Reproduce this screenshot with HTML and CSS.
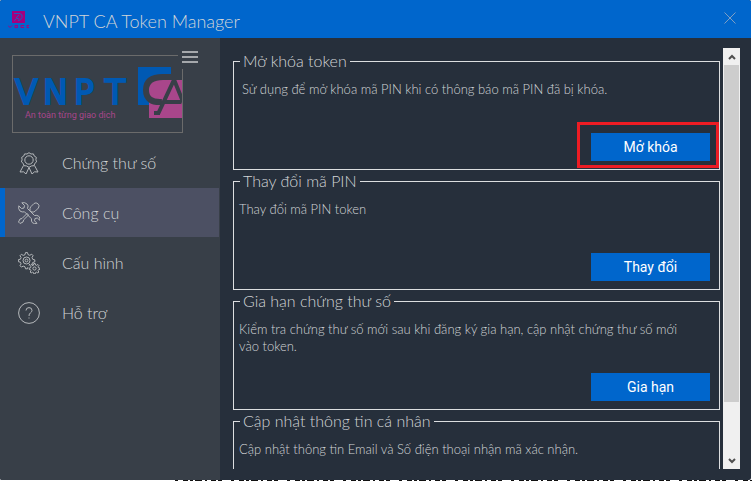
FILE: index.html
```html
<!DOCTYPE html>
<html lang="vi">
<head>
<meta charset="utf-8">
<title>VNPT CA Token Manager</title>
<link rel="stylesheet" href="styles.css">
</head>
<body>
<div class="window">
  <header class="titlebar">
    <svg class="app-icon" width="22" height="18" viewBox="0 0 22 18" aria-hidden="true">
      <path fill="#a3007f" d="M4 1h13v12H4z"/>
      <path fill="none" stroke="#2458c0" d="M6 3.500h6q3 1 2 4t-4 3M11 5l-3 3 3 1M6 11l2-2"/>
      <path fill="none" stroke="#a3007f" d="M0 15.500l2 2 2-2M7 15.500h2.500v2H7zM16 15.500h-3v2h3M21 15.500h-2v2h2"/>
    </svg>
    <h1 class="title">VNPT CA Token Manager</h1>
    <button class="close" aria-label="Đóng">
      <svg width="12" height="12" viewBox="0 0 12 12"><path d="M.5.5l11 11M11.500.5l-11 11"/></svg>
    </button>
  </header>

  <div class="body">
    <aside class="sidebar">
      <div class="brand">
        <svg class="logo" viewBox="0 0 169 76" role="img" aria-label="VNPT CA">
          <g class="logo-name">
            <text x="2" y="48">V</text>
            <text x="30" y="48">N</text>
            <text x="61" y="48">P</text>
            <text x="92" y="48">T</text>
          </g>
          <text class="logo-slogan" x="12" y="62">An toàn từng giao dịch</text>
          <path fill="#0059b3" d="M125 11h33v38h-33z"/>
          <path fill="#383f48" d="M136 24h33v25h-33z"/>
          <path fill="#a9468b" d="M136 24h33v38h-33z"/>
          <path class="logo-cut" d="M169 21h-19Q133 21 133 34t16 12"/>
          <path class="logo-cut thin" d="M145 58l15-32h2l13 32M150 46h18M141 57h6"/>
        </svg>
        <button class="menu" aria-label="Menu">
          <svg width="16" height="12" viewBox="0 0 16 12"><path d="M0 1h16M0 6h16M0 11h16"/></svg>
        </button>
      </div>
      <nav class="nav">
        <a class="nav-item" href="#certificates">
          <svg class="icon" viewBox="0 0 22 22"><circle cx="11" cy="8" r="4.200"/><path d="M11 .7l2 1.300 2.400-.1.900 2.200 2 1.200-.4 2.400.7 2.200-1.800 1.500-.8 2.300-2.400.2L11 15.300l-2.600-1.400-2.400-.2-.8-2.300-1.800-1.500.7-2.200-.4-2.400 2-1.200.9-2.200L9 2zM5.500 13.500L2 20l3.500-.2L8 22l3-6.500L14 22l2.500-2.200 3.500.2-3.500-6.500"/></svg>
          <span>Chứng thư số</span>
        </a>
        <a class="nav-item active" href="#tools" aria-current="page">
          <svg class="icon" viewBox="0 0 22 22"><path d="M3.800.8L6.500 3.500 6 6 3.500 6.500.8 3.800Q0 7 2 9q2 1.500 4.500.8l7 7q-.5 2.500 1 4 2 1.500 4.500.5l-2.500-2.500.5-2.300 2.300-.5 2.500 2.300q.5-2.500-1-4-1.800-1.500-4.300-.8l-7-7Q11 3.500 9 2 7 0 3.800.8zM12 8q-.5-2 1-3.500l3-3q2-1.500 4 .3t.4 4.200l-3 3Q16 10.500 14 10M12.500 8.500l1.200 1.200M9.500 11l-5.500 5.500L2 17l-1.500 3L2 21.500 5 20l.7-2.200 5.300-5.300"/></svg>
          <span>Công cụ</span>
        </a>
        <a class="nav-item" href="#settings">
          <svg class="icon" viewBox="0 0 22 22"><circle cx="8.500" cy="8.500" r="3.500"/><circle cx="8.500" cy="8.500" r="1.400"/><path d="M7.500.6h2l.5 2 1.800.7 1.900-1.100 1.400 1.500-1.100 1.800.7 1.800 2.100.6v2l-2.100.6-.7 1.600 1 1.800M7.500.6L7 2.700l-1.800.7-1.800-1.100L2 3.700l1.100 1.900-.7 1.600-2 .5v2l2 .5.7 1.700L2 13.700l1.400 1.400 1.800-1 1.800.7.5 2h2l.4-1.600M11 13.500l.8-1.500"/><circle cx="16.500" cy="16.500" r="1.600"/><path d="M15.800 11.500h1.400l.3 1.500 1 .4 1.400-.9 1 1-.9 1.300.5 1 1.400.3v1.300l-1.400.3-.5 1 .8 1.300-1 1-1.300-.8-1 .4-.3 1.300h-1.400l-.3-1.300-1-.4-1.300.8-1-1 .8-1.300-.5-1-1.300-.3v-1.300l1.300-.3.5-1-.8-1.300 1-1 1.300.9 1-.4z"/></svg>
          <span>Cấu hình</span>
        </a>
        <a class="nav-item" href="#help">
          <svg class="icon" viewBox="0 0 22 22"><circle cx="11" cy="11" r="10.400"/><path d="M8 8.500Q8 5.600 11 5.600t3 2.800q0 1.400-1.500 2.400T11 14M11 15.500v1"/></svg>
          <span>Hỗ trợ</span>
        </a>
      </nav>
    </aside>

    <main class="content">
      <div class="panels">
        <fieldset class="panel">
          <legend>Mở khóa token</legend>
          <p class="inset">Sử dụng để mở khóa mã PIN khi có thông báo mã PIN đã bị khóa.</p>
          <button class="action marked">Mở khóa</button>
        </fieldset>
        <fieldset class="panel">
          <legend>Thay đổi mã PIN</legend>
          <p>Thay đổi mã PIN token</p>
          <button class="action">Thay đổi</button>
        </fieldset>
        <fieldset class="panel">
          <legend>Gia hạn chứng thư số</legend>
          <p>Kiểm tra chứng thư số mới sau khi đăng ký gia hạn, cập nhật chứng thư số mới vào token.</p>
          <button class="action">Gia hạn</button>
        </fieldset>
        <fieldset class="panel">
          <legend>Cập nhật thông tin cá nhân</legend>
          <p>Cập nhật thông tin Email và Số điện thoại nhận mã xác nhận.</p>
        </fieldset>
      </div>
      <div class="scrollbar">
        <button class="arrow" aria-label="Cuộn lên"><svg width="8" height="6" viewBox="0 0 8 6"><path d="M1 5l3-3 3 3"/></svg></button>
        <div class="track"><div class="thumb"></div></div>
        <button class="arrow" aria-label="Cuộn xuống"><svg width="8" height="6" viewBox="0 0 8 6"><path d="M1 1l3 3 3-3"/></svg></button>
      </div>
    </main>
  </div>
</div>
<svg class="backdrop-line" height="1" aria-hidden="true"><path d="M175 .5h577"/></svg>
</body>
</html>
```

FILE: styles.css
```css
* { box-sizing: border-box; }

body {
  margin: 0;
  height: 100vh;
  display: flex;
  flex-direction: column;
  overflow: hidden;
  background: #fff;
  color: #d2d5d7;
  font-family: Lato, "Noto Sans", sans-serif;
  font-weight: 300;
}

button {
  margin: 0;
  padding: 0;
  border: 0;
  background: none;
  cursor: pointer;
}

.window {
  flex: 1;
  min-height: 0;
  margin-right: 1px;
  display: flex;
  flex-direction: column;
  border-radius: 2px;
  overflow: hidden;
  background: #262f3b;
}

.titlebar {
  height: 38px;
  flex: none;
  display: flex;
  align-items: center;
  padding: 0 15px 0 8px;
  background: #0066cc;
}

.title {
  flex: 1;
  margin: 4px 0 0 13px;
  font-size: 18px;
  font-weight: 300;
  line-height: 24px;
}

.close { height: 14px; margin-bottom: 2px; }
.close svg { display: block; }
.close path { stroke: #7f9fc4; fill: none; }

.body {
  flex: 1;
  min-height: 0;
  display: flex;
}

.sidebar {
  width: 220px;
  flex: none;
  background: #383f48;
}

.brand {
  position: relative;
  width: 171px;
  margin: 17px 0 5px 12px;
  border: 1px solid #6b6b6b;
}

.logo { display: block; width: 100%; height: 76px; }
.logo-name {
  fill: #0059b3;
  stroke: #0059b3;
  stroke-width: 2;
  font: 33px "DejaVu Sans", sans-serif;
}
.logo-slogan { fill: #a9468b; font: 9px Roboto, sans-serif; }
.logo-cut { fill: none; stroke: #383f48; stroke-width: 6; }
.logo-cut.thin { stroke-width: 4; }

.menu {
  position: absolute;
  top: -5px;
  right: -16px;
  padding: 0 0 6px 4px;
  background: #383f48;
}
.menu svg { display: block; }
.menu path { stroke: #a5a8ac; stroke-width: 2; }

.nav-item {
  display: flex;
  align-items: center;
  gap: 22px;
  height: 49px;
  margin: 0 1px 1px 0;
  padding-left: 13px;
  border-left: 5px solid transparent;
  color: inherit;
  font-size: 16px;
  text-decoration: none;
}
.nav-item.active { border-color: #0066cc; background: #4c5063; }

.icon {
  width: 22px;
  height: 22px;
  fill: none;
  stroke: #b5b8bb;
  stroke-width: 1;
}

.content {
  flex: 1;
  min-width: 0;
  display: flex;
  gap: 3px;
  padding: 10px 11px 11px 13px;
}

.panels {
  flex: 1;
  min-width: 0;
  overflow: hidden;
  padding-top: 3px;
}

.panel {
  display: flex;
  flex-direction: column;
  min-width: 0;
  height: 119px;
  margin: 0 0 1px;
  padding: 10px 9px 8px 5px;
  border: 1px solid #dcdee0;
}

.panel legend {
  margin-left: 1px;
  padding: 0 3px;
  font-size: 16px;
  line-height: 20px;
}

.panel p {
  margin: 0;
  padding-right: 20px;
  font-size: 13px;
  line-height: 17px;
}
.panel .inset { padding-left: 3px; }

.action {
  position: relative;
  align-self: flex-end;
  width: 119px;
  height: 28px;
  margin-top: auto;
  background: #0066cc;
  color: #fff;
  font: 14px Roboto, sans-serif;
}

.marked::after {
  content: "";
  position: absolute;
  inset: -11px -9px -7px -14px;
  border: 3px solid #ed1c24;
}

.scrollbar {
  width: 17px;
  flex: none;
  display: flex;
  flex-direction: column;
  background: #f0f0f0;
}

.arrow {
  display: grid;
  place-items: center;
  height: 17px;
}
.arrow path { fill: none; stroke: #505050; stroke-width: 2; }

.track { flex: 1; padding: 0 1px; }
.thumb { height: 87%; background: #cdcdcd; }

.backdrop-line { display: block; width: 100%; flex: none; }
.backdrop-line path { stroke: #111; stroke-dasharray: 3 5 5 2 3 2 7 3 2 4 5 2 4 9; }
```
